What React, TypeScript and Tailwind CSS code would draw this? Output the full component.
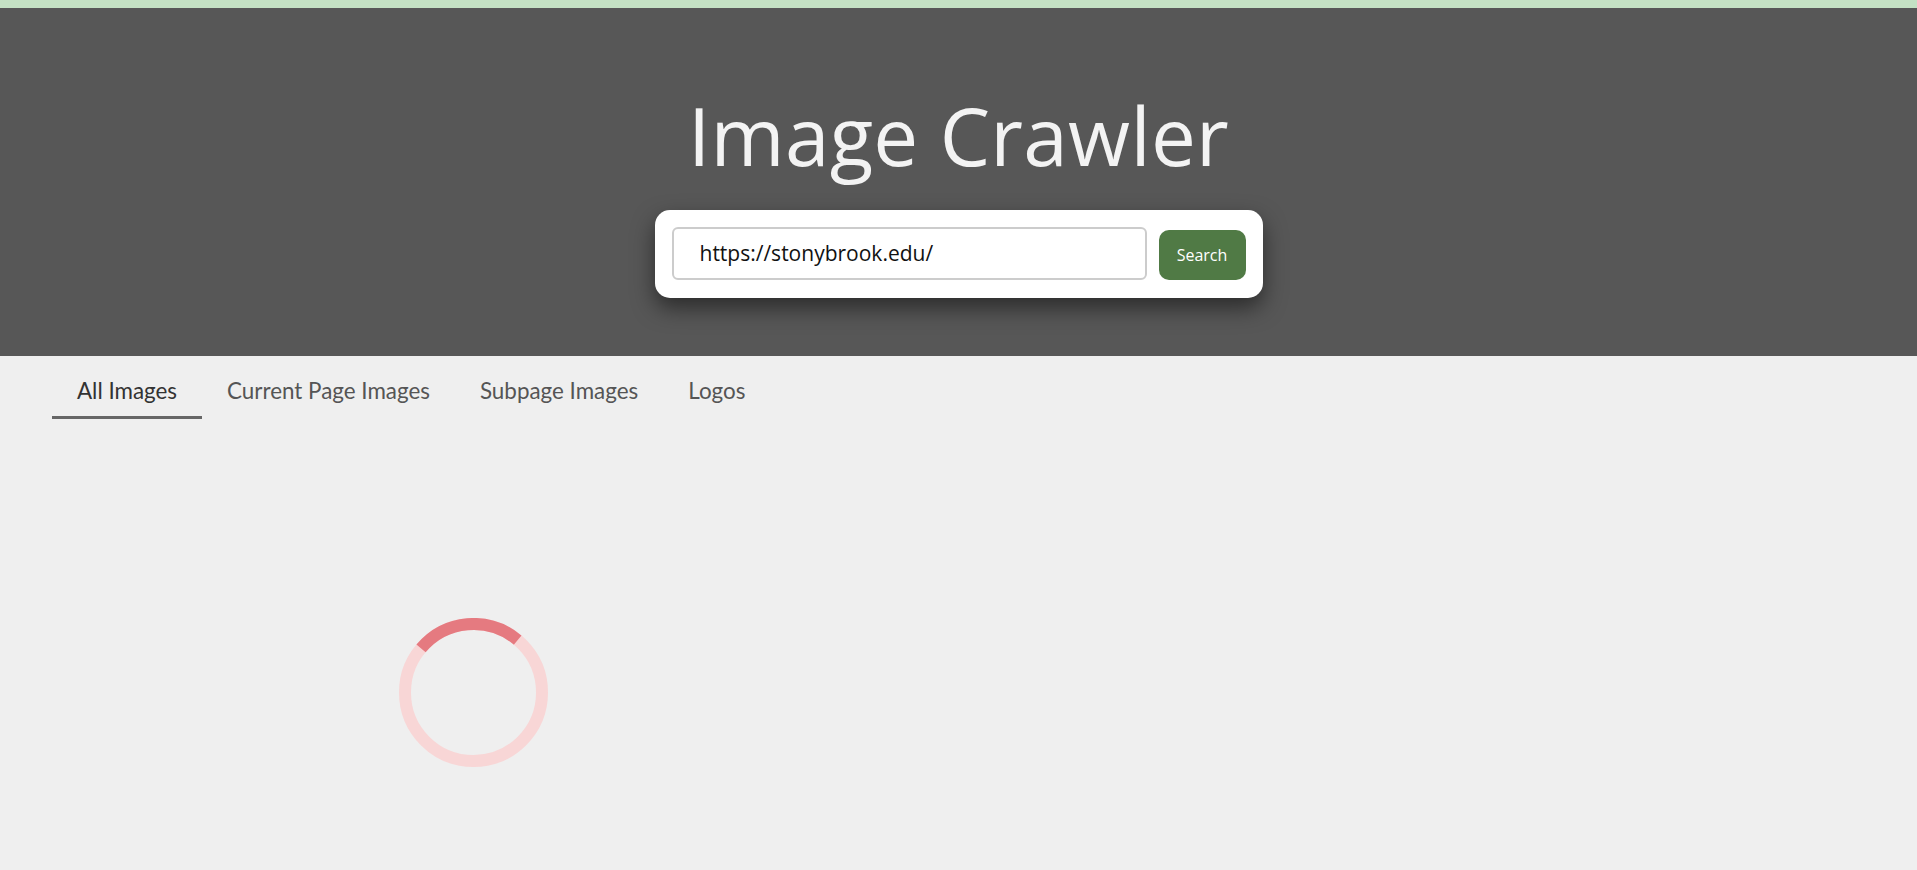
import React from "react";

const tabs = ["All Images", "Current Page Images", "Subpage Images", "Logos"];

function Spinner() {
  const r = 68.5;
  const c = 2 * Math.PI * r;
  const arc = c * 0.25;
  return (
    <svg width="149" height="149" viewBox="0 0 149 149">
      <circle cx="74.5" cy="74.5" r={r} fill="none" stroke="#f8d6d6" strokeWidth="12" />
      <circle
        cx="74.5"
        cy="74.5"
        r={r}
        fill="none"
        stroke="#e57a80"
        strokeWidth="12"
        strokeDasharray={`${arc} ${c}`}
        transform="rotate(-140 74.5 74.5)"
      />
    </svg>
  );
}

export default function App() {
  return (
    <div className="min-h-screen bg-[#efefef]">
      <div className="h-2 bg-[#c4e1c4]" />
      <header className="h-[348px] bg-[#575757] flex flex-col items-center">
        <h1 className="mt-[87px] text-[80px] leading-none text-[#f3f3f3] font-['Open_Sans',sans-serif] font-normal tracking-[0.3px]">
          Image Crawler
        </h1>
        <div className="mt-[35px] w-[608px] h-[88px] bg-white rounded-[15px] px-[17px] pt-[17px] flex items-start shadow-[0_10px_22px_rgba(0,0,0,0.5)]">
          <div className="w-[475px] h-[53px] border-2 border-[#cccccc] rounded-[6px] flex items-center pl-[26px] text-[21px] text-[#111] font-['Open_Sans',sans-serif]">
            https://stonybrook.edu/
          </div>
          <button className="ml-[12px] mt-[3px] w-[87px] h-[50px] bg-[#507a45] rounded-[10px] text-white text-[16px] font-['Open_Sans',sans-serif]">
            Search
          </button>
        </div>
      </header>
      <nav className="flex pl-[52px] pt-[22px] font-['Lato',sans-serif]">
        {tabs.map((t, i) => (
          <div
            key={t}
            className={
              i === 0
                ? "px-[25px] pb-[12px] text-[22.4px] leading-[26px] text-[#333] border-b-[3px] border-[#666]"
                : "px-[25px] pb-[12px] text-[22.4px] leading-[26px] text-[#555] border-b-[3px] border-transparent"
            }
          >
            {t}
          </div>
        ))}
      </nav>
      <div className="w-[946px] flex justify-center pt-[199px]">
        <Spinner />
      </div>
    </div>
  );
}
